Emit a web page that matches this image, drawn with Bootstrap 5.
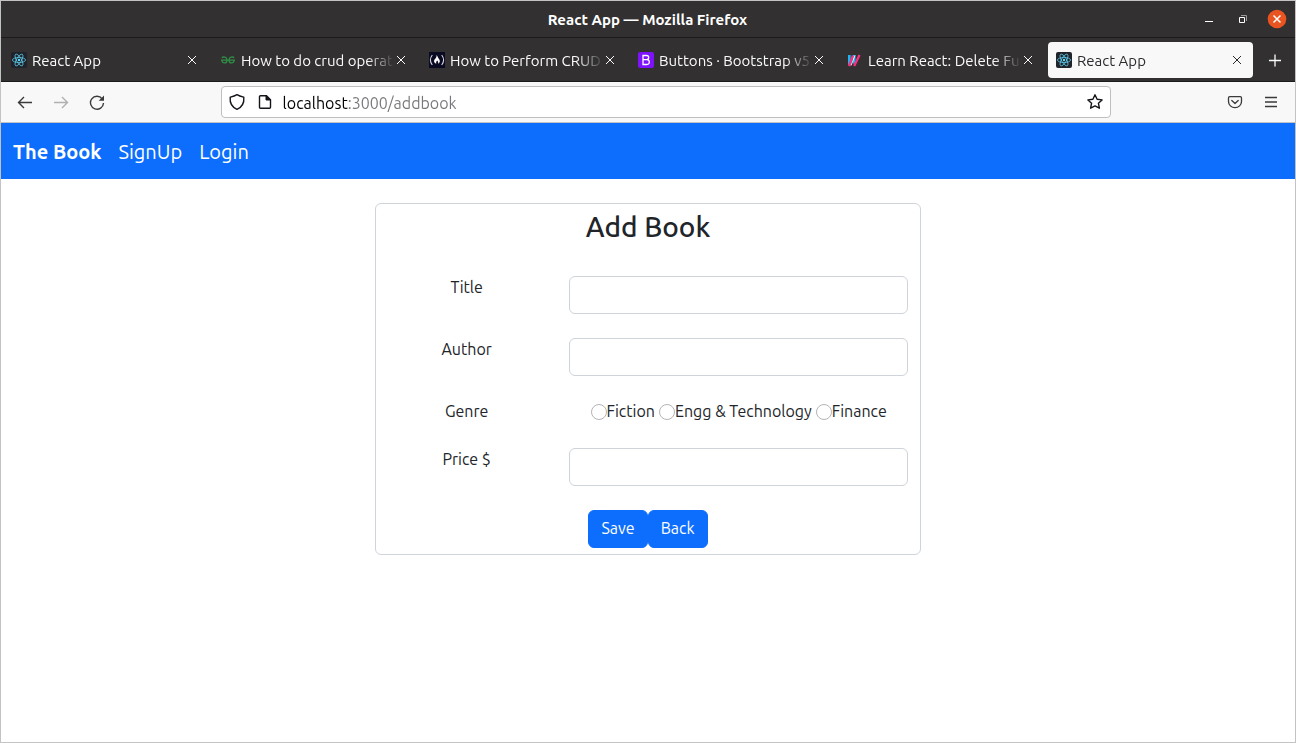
<!DOCTYPE html>
<html lang="en">
<head>
<meta charset="utf-8">
<meta name="viewport" content="width=device-width, initial-scale=1">
<title>React App</title>
<link href="https://cdn.jsdelivr.net/npm/bootstrap@5.3.0/dist/css/bootstrap.min.css" rel="stylesheet">
<style>
body{font-family:Ubuntu,"Noto Sans",sans-serif;font-size:16px;line-height:24px;color:#212529}
.window-frame{border:1px solid #c3c3c3}
.title-bar{background:#323031;border-bottom:1px solid #1c1b1b;height:37px;font-size:15px;color:#fff;display:grid;grid-template-columns:1fr auto 1fr;padding-right:1px}
.title-bar strong{line-height:22px;padding-top:2px}
.win-btn{width:34px;height:36px}
.plain-btn{background:none;border:0;padding:0;color:inherit;display:flex;align-items:center;justify-content:center}
.tab-bar{background:#323031;border-bottom:1px solid #1c1b1b;height:44px;gap:4px;padding-left:2px;color:#fbfbfe}
.browser-tab{flex:1 1 0;min-width:0;height:36px;border-radius:4px;padding:0 8px;font-size:15px}
.browser-tab.current{background:#f8f8f8;color:#2b2a2e}
.tab-icon{width:16px;height:16px;margin-right:5px;flex:none}
.tab-title{flex:1 1 0;min-width:0;padding-top:2px;overflow:hidden;white-space:nowrap;color:inherit;text-decoration:none;-webkit-mask-image:linear-gradient(to left,transparent,#000 28px);mask-image:linear-gradient(to left,transparent,#000 28px)}
.tab-close{width:12px;height:16px;flex:none;margin-right:2px}
.new-tab{width:36px;height:36px;margin-right:2px}
.tool-bar{background:#f8f8f8;border-bottom:1px solid #c3c3c3;height:41px;padding:0 6px;color:#3a393c}
.tool-btn{width:36px;height:32px;flex:none}
.spring{flex:106 1 0}
.url-box{flex:890 1 0;min-width:0;height:32px;background:#fff;border:1px solid #bfbfc1;border-radius:4px;color:#15141a;padding:0 1px}
.url-btn{width:28px;height:30px;flex:none}
.url-input{flex:1 1 0;min-width:0;border:0;outline:0;padding:2px 0 0 4px;font-size:16px;color:transparent;background:linear-gradient(90deg,#000 69px,#76767b 69px);-webkit-background-clip:text;background-clip:text}
.site-nav{min-height:56px;padding:2px 12px 0;font-size:20px;line-height:30px;gap:17px}
.site-nav a{color:#fff;text-decoration:none}
.book-card{border:1px solid #ced4da;border-radius:6px;padding:6px 0}
.book-card h3{font-size:28px;line-height:34px;font-weight:500;margin:0}
.book-card label,.book-card span,.book-card .btn{line-height:22px}
.book-card .row{min-height:24px}
.book-card .btn{padding-bottom:8px;background:#0d6efd}
.field-col{padding:0 12px}
.book-card .form-control{height:38px;border-color:#ced4da;border-radius:6px}
.genre-radio{appearance:none;width:16px;height:16px;border:1px solid #b5b5b8;border-radius:50%;background:#fff;margin:2px 0 0;flex:none}
.genre-radio:checked{border:5px solid #0d6efd}
</style>
</head>
<body>
<svg class="d-none" aria-hidden="true">
<symbol id="x" viewBox="0 0 16 16"><path d="M4 4l8 8M12 4l-8 8" fill="none" stroke="currentColor" stroke-width="1"/></symbol>
<symbol id="react" viewBox="0 0 16 16"><rect width="16" height="16" rx="2" fill="#20232a"/><g fill="none" stroke="#61dafb" stroke-width=".7"><ellipse cx="8" cy="8" rx="6.600" ry="2.500"/><ellipse cx="8" cy="8" rx="6.600" ry="2.500" transform="rotate(60 8 8)"/><ellipse cx="8" cy="8" rx="6.600" ry="2.500" transform="rotate(120 8 8)"/></g><circle cx="8" cy="8" r="1.200" fill="#61dafb"/></symbol>
</svg>
<div class="window-frame min-vh-100 d-flex flex-column bg-white">
  <header>
    <div class="title-bar align-items-center">
      <span></span>
      <strong>React App — Mozilla Firefox</strong>
      <div class="d-flex justify-content-end">
        <button class="plain-btn win-btn" aria-label="Minimize"><svg width="16" height="16"><path d="M4 10.5h8" stroke="#fff"/></svg></button>
        <button class="plain-btn win-btn" aria-label="Restore"><svg width="16" height="16"><g fill="none"><path d="M6 4.5h5.500v5.500" stroke="#999"/><path d="M4.500 6.500h5v5h-5z" stroke="#fff"/></g></svg></button>
        <button class="plain-btn win-btn" aria-label="Close"><svg width="20" height="20"><circle cx="10" cy="10" r="9.300" fill="#e95420"/><path d="M6.500 6.500l7 7M13.500 6.500l-7 7" stroke="#fff" stroke-width="1.500"/></svg></button>
      </div>
    </div>
    <nav class="tab-bar d-flex align-items-center" aria-label="Tabs">
      <div class="browser-tab d-flex align-items-center"><svg class="tab-icon"><use href="#react"/></svg><a href="#" class="tab-title">React App</a><button class="plain-btn tab-close" aria-label="Close tab"><svg class="flex-shrink-0" width="16" height="16"><use href="#x"/></svg></button></div>
      <div class="browser-tab d-flex align-items-center"><svg class="tab-icon" viewBox="0 0 16 16" fill="none" stroke="#2f8d46" stroke-width="1.300"><path d="M1.800 5.700c1.500-1.300 5.200-.8 5.200 2.500 0 3.600-4.600 3.600-5.200.3M14.200 5.700C12.700 4.400 9 4.900 9 8.200c0 3.600 4.600 3.600 5.200.3M1 8.200h14"/></svg><a href="#" class="tab-title">How to do crud operati</a><button class="plain-btn tab-close" aria-label="Close tab"><svg class="flex-shrink-0" width="16" height="16"><use href="#x"/></svg></button></div>
      <div class="browser-tab d-flex align-items-center"><svg class="tab-icon" viewBox="0 0 16 16"><path fill="#0a0a23" d="M0 0h16v16H0z"/><path d="M3.300 3Q-.5 8 3.300 13M12.700 3q3.800 5 0 10" fill="none" stroke="#d5d5e0" stroke-width="1.100"/><path d="M7.500 3c1.500 1.200 1 2.500 2.300 3.700 1.500 1.700 1.500 3.700-.8 5 .6-1.700-.1-2.500-1-3.200-.5 1.200-1.200 1.600-.7 3.200C4.500 10.500 4.700 8.500 6 7c1-1.200 1.800-2 1.500-4z" fill="#fff"/></svg><a href="#" class="tab-title">How to Perform CRUD</a><button class="plain-btn tab-close" aria-label="Close tab"><svg class="flex-shrink-0" width="16" height="16"><use href="#x"/></svg></button></div>
      <div class="browser-tab d-flex align-items-center"><svg class="tab-icon" viewBox="0 0 16 16"><rect width="16" height="16" rx="2" fill="#7d12fb"/><path d="M5 3.500h3.500q2.200 0 2.200 2t-2.200 2.200H5h3.900q2.400 0 2.400 2.400t-2.400 2.400H5z" fill="none" stroke="#fff" stroke-width="1.300"/></svg><a href="#" class="tab-title">Buttons · Bootstrap v5.</a><button class="plain-btn tab-close" aria-label="Close tab"><svg class="flex-shrink-0" width="16" height="16"><use href="#x"/></svg></button></div>
      <div class="browser-tab d-flex align-items-center"><svg class="tab-icon" viewBox="0 0 16 16" fill="none"><path d="M1 3h2.600v8L1 13zM6 3h2.500v7L6 12z" fill="#15b8f5"/><path d="M2 14L6 3.500M7.200 14L12.500 3" stroke="#ff2e83" stroke-width="2.300"/><path d="M4 13.500L8 3.500" stroke="#fff" stroke-width=".9"/></svg><a href="#" class="tab-title">Learn React: Delete Fun</a><button class="plain-btn tab-close" aria-label="Close tab"><svg class="flex-shrink-0" width="16" height="16"><use href="#x"/></svg></button></div>
      <div class="browser-tab current d-flex align-items-center"><svg class="tab-icon"><use href="#react"/></svg><a href="#" class="tab-title">React App</a><button class="plain-btn tab-close" aria-label="Close tab"><svg class="flex-shrink-0" width="16" height="16"><use href="#x"/></svg></button></div>
      <button class="plain-btn new-tab" aria-label="New tab"><svg width="16" height="16"><path d="M2 8.500h12M8 2.500v12" stroke="currentColor" stroke-width="1.300"/></svg></button>
    </nav>
    <div class="tool-bar d-flex align-items-center">
      <button class="plain-btn tool-btn" aria-label="Back"><svg width="16" height="16" fill="none" stroke="currentColor" stroke-width="1.400"><path d="M15 8.500H1.500M7 3L1.500 8.500 7 14"/></svg></button>
      <button class="plain-btn tool-btn" aria-label="Forward" disabled><svg width="16" height="16" fill="none" stroke="#b0b0b1" stroke-width="1.400"><path d="M1 8.500h13.500M9 3l5.500 5.500L9 14"/></svg></button>
      <button class="plain-btn tool-btn" aria-label="Reload"><svg width="16" height="16"><path d="M13.200 4.800A6.500 6.500 0 1 0 14.500 9" fill="none" stroke="currentColor" stroke-width="1.400"/><path d="M15 1.500v5.300H9.700z" fill="currentColor"/></svg></button>
      <span class="spring"></span>
      <div class="url-box d-flex align-items-center">
        <button class="plain-btn url-btn" aria-label="Site protection"><svg width="20" height="18" viewBox="0 0 20 18"><path d="M10 1.700C7.500 3.300 5.500 3.700 3.200 4.200 2.700 9.500 4.700 14 10 16.300c5.300-2.300 7.300-6.800 6.800-12.100C14.500 3.700 12.500 3.300 10 1.700z" fill="none" stroke="currentColor" stroke-width="1.400" stroke-linejoin="round"/></svg></button>
        <button class="plain-btn url-btn" aria-label="Site information"><svg width="16" height="16" viewBox="0 0 16 16"><path d="M3.500 1.700h6l4 4v7.600q0 1-1 1h-9q-1 0-1-1V2.700q0-1 1-1z" fill="none" stroke="currentColor" stroke-width="1.400"/><path d="M9 1.500V6h4.500z" fill="currentColor" stroke="currentColor"/></svg></button>
        <input class="url-input" type="text" value="localhost:3000/addbook" aria-label="Address">
        <button class="plain-btn url-btn" aria-label="Bookmark"><svg width="18" height="18" viewBox="0 0 18 18"><path d="M9 1.800l2.100 4.500 5 .6-3.700 3.300 1 5L9 12.900l-4.400 2.300 1-5L1.900 6.900l5-.6z" fill="none" stroke="currentColor" stroke-width="1.400" stroke-linejoin="round"/></svg></button>
      </div>
      <span class="spring"></span>
      <button class="plain-btn tool-btn" aria-label="Pocket"><svg width="16" height="16" fill="none" stroke="currentColor" stroke-width="1.300" stroke-linecap="round" stroke-linejoin="round"><path d="M2.700 2.700h10.600q1.200 0 1.200 1.200V7.500a6.500 6.200 0 0 1-13 0V3.900q0-1.200 1.200-1.200zM4.800 6.500L8 9.500l3.200-3"/></svg></button>
      <button class="plain-btn tool-btn" aria-label="Menu"><svg width="16" height="16" stroke="currentColor" stroke-width="1.300"><path d="M2 3.500h12M2 8h12M2 12.500h12"/></svg></button>
    </div>
  </header>
  <nav class="site-nav bg-primary d-flex align-items-center" aria-label="Site">
    <a href="#" class="fw-bold">The Book</a>
    <a href="#">SignUp</a>
    <a href="#">Login</a>
  </nav>
  <main class="container">
    <div class="row justify-content-center">
      <div class="col-md-6">
        <form class="book-card mt-4 text-center d-flex flex-column gap-4">
          <h3 class="pb-2">Add Book</h3>
          <div class="row g-0">
            <label for="title" class="col-4">Title</label>
            <div class="col-8 field-col"><input id="title" type="text" class="form-control"></div>
          </div>
          <div class="row g-0">
            <label for="author" class="col-4">Author</label>
            <div class="col-8 field-col"><input id="author" type="text" class="form-control"></div>
          </div>
          <div class="row g-0" role="radiogroup" aria-labelledby="genre">
            <span id="genre" class="col-4">Genre</span>
            <div class="col-8 d-flex justify-content-center align-items-start gap-1">
              <label class="d-flex align-items-center"><input class="genre-radio" type="radio" name="genre">Fiction</label>
              <label class="d-flex align-items-center"><input class="genre-radio" type="radio" name="genre">Engg &amp; Technology</label>
              <label class="d-flex align-items-center"><input class="genre-radio" type="radio" name="genre">Finance</label>
            </div>
          </div>
          <div class="row g-0">
            <label for="price" class="col-4">Price $</label>
            <div class="col-8 field-col"><input id="price" type="text" class="form-control"></div>
          </div>
          <div class="d-flex justify-content-center"><button type="submit" class="btn btn-primary">Save</button><button type="button" class="btn btn-primary">Back</button></div>
        </form>
      </div>
    </div>
  </main>
</div>
<script src="https://cdn.jsdelivr.net/npm/bootstrap@5.3.0/dist/js/bootstrap.bundle.min.js"></script>
</body>
</html>
